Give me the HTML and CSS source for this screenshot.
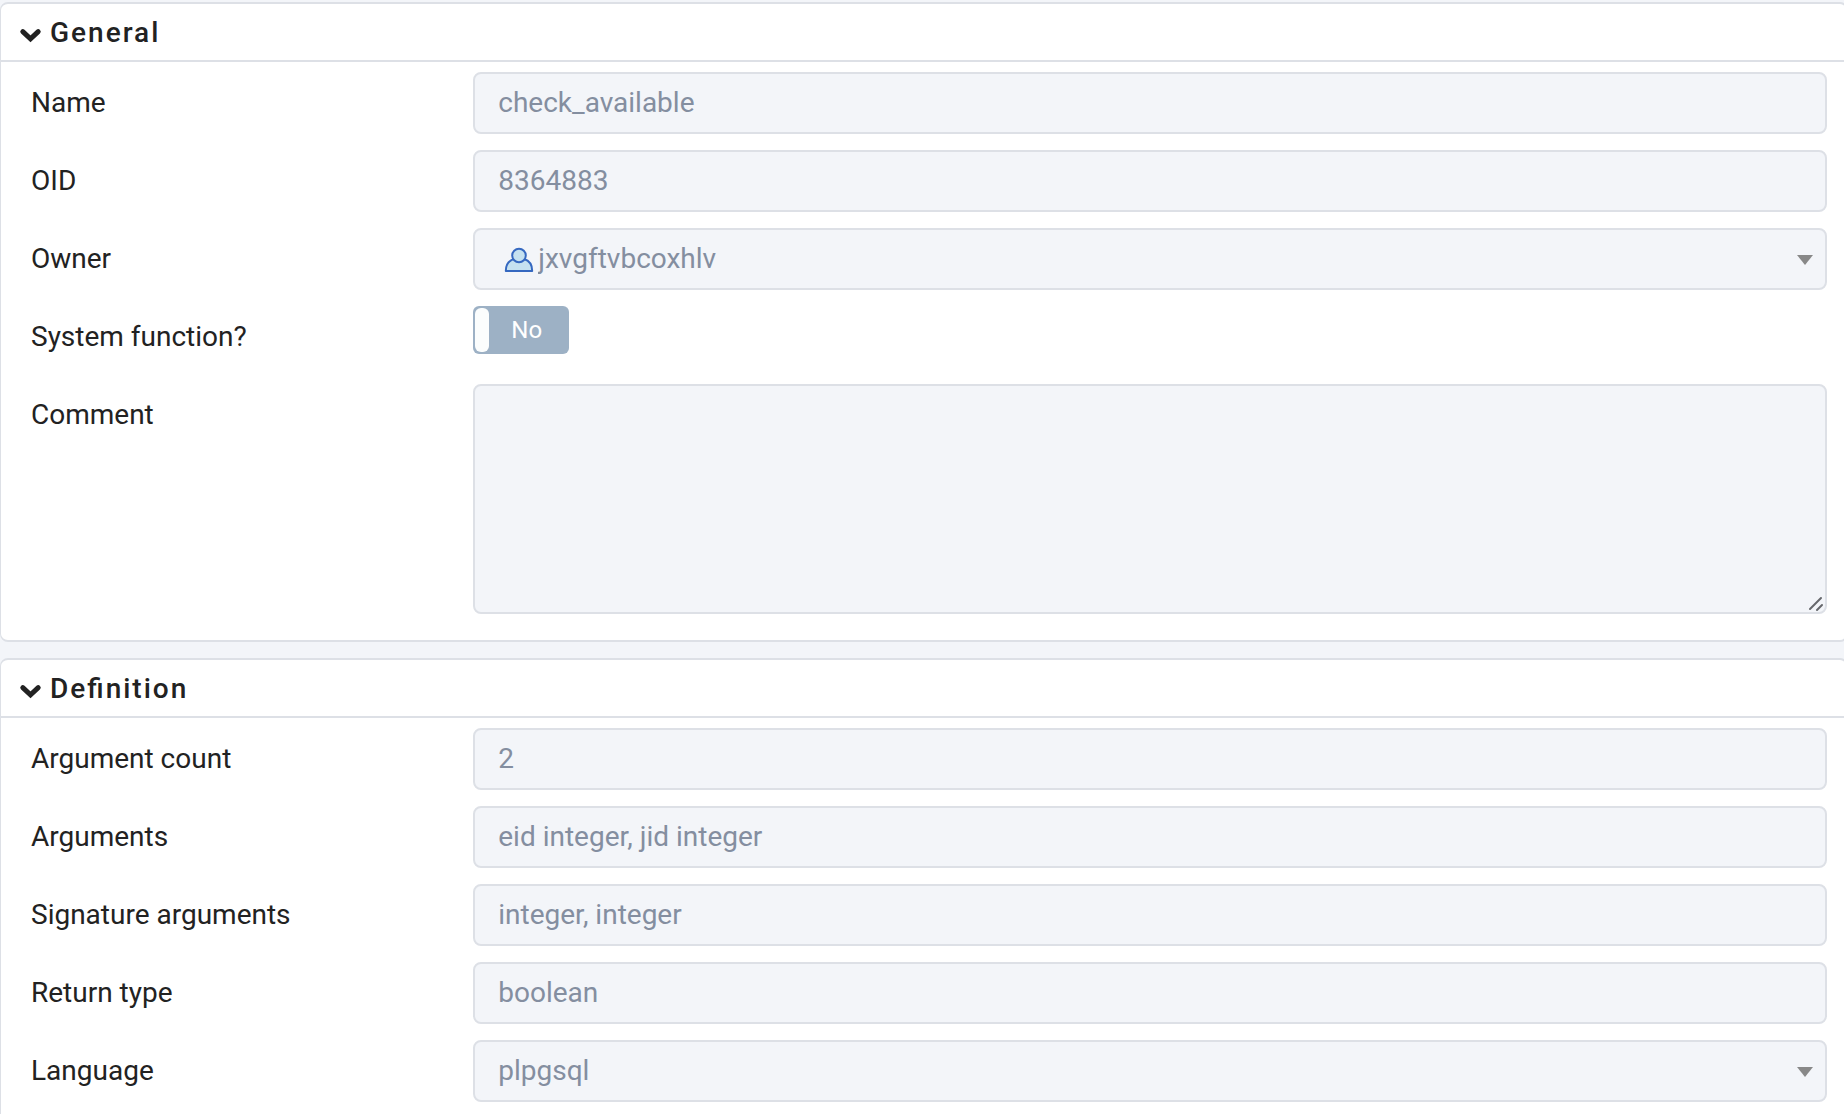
FILE: index.html
```html
<!DOCTYPE html>
<html lang="en">
<head>
    <meta charset="UTF-8">
    <title>check_available</title>
    <link rel="stylesheet" href="styles.css">
</head>
<body>
    <form class="properties">
        <section class="panel">
            <h2 class="panel-header">
                <button type="button" class="panel-toggle" aria-expanded="true">
                    <svg class="chevron" viewBox="0 0 24 16" aria-hidden="true"><path d="M4.8 4.6 L12.5 11.8 L20.2 4.6"/></svg>
                    General
                </button>
            </h2>
            <div class="panel-body">
                <div class="row">
                    <label for="name">Name</label>
                    <input class="control" type="text" id="name" value="check_available" readonly>
                </div>
                <div class="row">
                    <label for="oid">OID</label>
                    <input class="control" type="text" id="oid" value="8364883" readonly>
                </div>
                <div class="row">
                    <label for="owner">Owner</label>
                    <div class="field">
                        <select class="control with-icon" id="owner" disabled>
                            <option>jxvgftvbcoxhlv</option>
                        </select>
                        <svg class="user-icon" viewBox="0 0 30 26" aria-hidden="true">
                            <path d="M1.8 24 C1.8 17.5 5 13.5 10 12 H20 C25 13.5 28.2 17.5 28.2 24 Z"/>
                            <circle cx="15" cy="8.5" r="6.8"/>
                        </svg>
                        <svg class="arrow" viewBox="0 0 16 10" aria-hidden="true"><path d="M0 0 H16 L8 10 Z"/></svg>
                    </div>
                </div>
                <div class="row">
                    <label for="system">System function?</label>
                    <div class="switch">
                        <input type="checkbox" id="system" disabled>
                        <span class="switch-handle"></span>
                        <span class="switch-text">No</span>
                    </div>
                </div>
                <div class="row">
                    <label for="comment">Comment</label>
                    <div class="field">
                        <textarea class="control" id="comment" readonly></textarea>
                        <svg class="grip" viewBox="0 0 16 16" aria-hidden="true"><path d="M2 13 L13 2 M9 14 L14 9"/></svg>
                    </div>
                </div>
            </div>
        </section>

        <section class="panel">
            <h2 class="panel-header">
                <button type="button" class="panel-toggle" aria-expanded="true">
                    <svg class="chevron" viewBox="0 0 24 16" aria-hidden="true"><path d="M4.8 4.6 L12.5 11.8 L20.2 4.6"/></svg>
                    Definition
                </button>
            </h2>
            <div class="panel-body">
                <div class="row">
                    <label for="argcount">Argument count</label>
                    <input class="control" type="text" id="argcount" value="2" readonly>
                </div>
                <div class="row">
                    <label for="args">Arguments</label>
                    <input class="control" type="text" id="args" value="eid integer, jid integer" readonly>
                </div>
                <div class="row">
                    <label for="sigargs">Signature arguments</label>
                    <input class="control" type="text" id="sigargs" value="integer, integer" readonly>
                </div>
                <div class="row">
                    <label for="rettype">Return type</label>
                    <input class="control" type="text" id="rettype" value="boolean" readonly>
                </div>
                <div class="row">
                    <label for="language">Language</label>
                    <div class="field">
                        <select class="control" id="language" disabled>
                            <option>plpgsql</option>
                        </select>
                        <svg class="arrow" viewBox="0 0 16 10" aria-hidden="true"><path d="M0 0 H16 L8 10 Z"/></svg>
                    </div>
                </div>
            </div>
        </section>
    </form>
</body>
</html>
```

FILE: styles.css
```css
* {
    box-sizing: border-box;
}
body {
    margin: 0;
    height: 100vh;
    overflow: hidden;
    background-color: #f3f5f9;
    color: #222222;
    font-family: Roboto, "Liberation Sans", sans-serif;
    font-size: 28px;
}
.properties {
    display: flex;
    flex-direction: column;
    gap: 16px;
    padding-top: 2px;
    /* the right edge of the panels runs under the pane edge */
    margin-right: -4px;
}
.panel {
    background-color: #ffffff;
    border: 2px solid #dde0e6;
    border-left-width: 1px;
    border-radius: 8px;
}
.panel-header {
    margin: 0;
    border-bottom: 2px solid #dde0e6;
    font-size: 28px;
    font-weight: 500;
}
.panel-toggle {
    display: flex;
    align-items: center;
    gap: 8px;
    width: 100%;
    height: 56px;
    padding: 0 17px;
    border: none;
    background: none;
    color: inherit;
    font: inherit;
    letter-spacing: 2px;
    font-feature-settings: "liga" 1;
}
.chevron {
    width: 24px;
    height: 16px;
    margin-top: 6px;
    fill: none;
    stroke: #222222;
    stroke-width: 5;
    stroke-linecap: round;
}
.panel-body {
    display: flex;
    flex-direction: column;
    gap: 16px;
    padding: 10px 19px 26px 21px;
}
.row {
    display: grid;
    grid-template-columns: 1fr 3fr;
}
.row label {
    padding-left: 9px;
    line-height: 62px;
    height: 62px;
}
.control {
    display: block;
    width: 100%;
    height: 62px;
    margin: 0;
    padding: 0 23px 2px;
    border: 2px solid #dde0e6;
    border-radius: 8px;
    background-color: #f3f5f9;
    color: #848ea0;
    font: inherit;
    appearance: none;
    outline: none;
    opacity: 1;
}
.with-icon {
    padding-left: 63px;
}
textarea.control {
    height: 230px;
    padding: 12px 23px;
    resize: none;
}
.field {
    position: relative;
}
.user-icon {
    position: absolute;
    left: 31px;
    top: 19px;
    width: 30px;
    height: 26px;
    fill: #c5e1f0;
    stroke: #3568c0;
    stroke-width: 2;
    stroke-linejoin: round;
}
.arrow {
    position: absolute;
    right: 14px;
    top: 27px;
    width: 16px;
    height: 10px;
    fill: #888888;
}
.grip {
    position: absolute;
    right: 3px;
    bottom: 2px;
    width: 16px;
    height: 16px;
    fill: none;
    stroke: #66686c;
    stroke-width: 2;
    stroke-linecap: round;
}
.switch {
    position: relative;
    display: flex;
    width: 96px;
    height: 48px;
    padding: 2px;
    border-radius: 6px;
    background-color: #9db1c5;
    color: #ffffff;
    font-size: 24px;
    line-height: 44px;
}
.switch input {
    position: absolute;
    inset: 0;
    width: 100%;
    height: 100%;
    margin: 0;
    opacity: 0;
}
.switch-handle {
    width: 14px;
    border-radius: 6px;
    background-color: #fbfdfd;
}
.switch-text {
    flex: 1;
    padding-right: 3px;
    text-align: center;
}
```
